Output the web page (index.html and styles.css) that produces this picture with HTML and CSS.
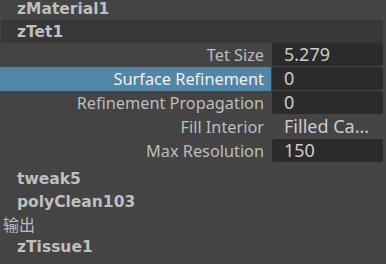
FILE: index.html
```html
<!DOCTYPE html>
<html lang="zh">
<head>
  <meta charset="UTF-8">
  <title>Attribute Editor</title>
  <link rel="stylesheet" href="styles.css">
</head>
<body>

<div class="node">zMaterial1</div>
<div class="node current">zTet1</div>

<div class="attrs">
  <div class="attr">
    <span class="label">Tet Size</span>
    <span class="value box">5.279</span>
  </div>
  <div class="attr selected">
    <span class="label">Surface Refinement</span>
    <span class="value box">0</span>
  </div>
  <div class="attr">
    <span class="label">Refinement Propagation</span>
    <span class="value box">0</span>
  </div>
  <div class="attr">
    <span class="label">Fill Interior</span>
    <span class="value">Filled Ca...</span>
  </div>
  <div class="attr">
    <span class="label">Max Resolution</span>
    <span class="value box">150</span>
  </div>
</div>

<div class="node">tweak5</div>
<div class="node">polyClean103</div>
<div class="group">输出</div>
<div class="node">zTissue1</div>

</body>
</html>
```

FILE: styles.css
```css
body {
  margin: 0;
  background: #444444;
  color: #bdbdbd;
  font-family: "Noto Sans", sans-serif;
  overflow: hidden;
  padding-right: 3px;
}
.node {
  height: 23px;
  line-height: 24px;
  padding-left: 17px;
  font-family: "DejaVu Sans", sans-serif;
  font-weight: bold;
  font-size: 15.5px;
  color: #bfbfbf;
}
.node:first-child {
  margin-top: -3px;
}
.node.current {
  background: #373737;
  margin-left: 1px;
  padding-left: 16px;
}
.attrs {
  margin-bottom: 4px;
}
.attr {
  display: flex;
  height: 24px;
  font-size: 16.3px;
}
.label {
  width: 264px;
  padding-right: 7px;
  text-align: right;
  line-height: 24px;
}
.selected .label {
  background: #5285a6;
  color: #f0f0f0;
}
.value {
  flex: 1;
  margin: 0 0 1px 1px;
  padding-left: 12px;
  line-height: 23px;
  color: #cccccc;
  font-size: 18px;
}
.value.box {
  background: #2b2b2b;
  border-radius: 2px;
}
.group {
  height: 22px;
  line-height: 22px;
  padding-left: 3px;
  font-family: "Noto Sans CJK SC", sans-serif;
  font-size: 16px;
  color: #bdbdbd;
}
```
